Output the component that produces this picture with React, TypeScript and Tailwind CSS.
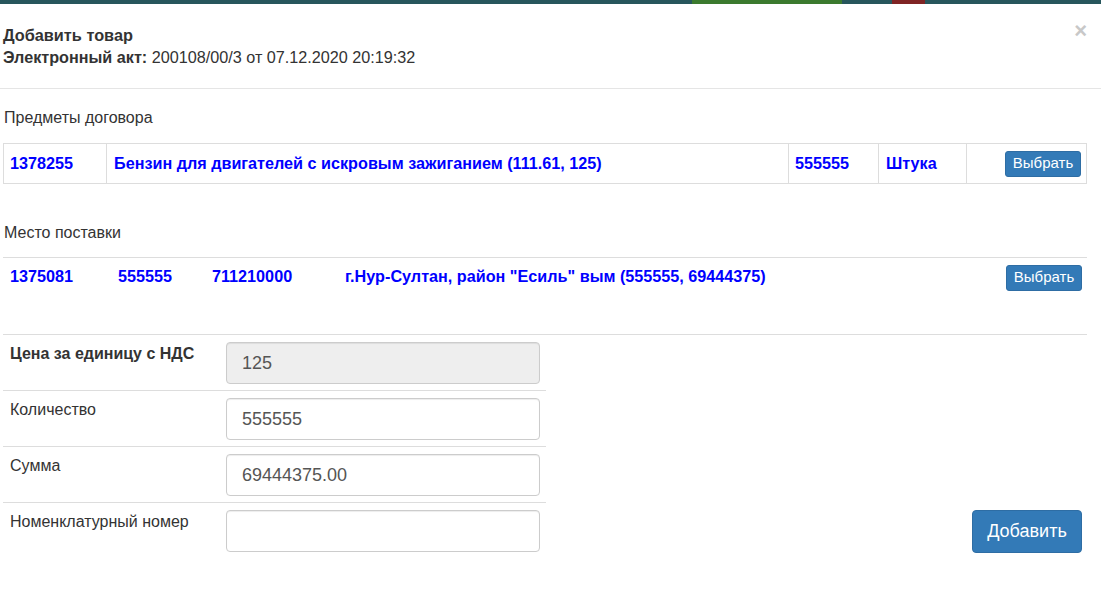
import React from "react";

const font = { fontFamily: '"Liberation Sans", Arial, Helvetica, sans-serif' };

export default function App() {
  return (
    <div className="w-[1101px] h-[599px] bg-white text-[#333] text-[16px] overflow-hidden" style={font}>
      {/* underlying page bar, dimmed */}
      <div className="h-[4px] flex bg-[#27565c]">
        <div className="w-[692px]" />
        <div className="w-[150px] bg-[#3b7a2e]" />
        <div className="w-[50px]" />
        <div className="w-[33px] bg-[#7f2424]" />
      </div>

      {/* header */}
      <div className="relative px-[3px] pt-[20px] pb-[20px] border-b border-[#e5e5e5]">
        <div className="font-bold leading-[22px] text-[16.3px]">Добавить товар</div>
        <div className="leading-[22px] text-[16.2px]">
          <span className="font-bold">Электронный акт:</span> 200108/00/3 от 07.12.2020 20:19:32
        </div>
        <button className="absolute right-[14px] top-[16px] text-[22px] font-bold leading-none text-[#c8c8c8]">×</button>
      </div>

      {/* body */}
      <div className="px-[3px]">
        <div className="mt-[19px] leading-[20px] text-[16px] pl-[1px]">Предметы договора</div>
        <table className="mt-[15px] w-[1084px] border-collapse border border-[#ddd] text-[#0000ff] font-bold text-[16.2px]">
          <tbody>
            <tr className="h-[40px]">
              <td className="w-[103px] border border-[#ddd] pl-[6px]">1378255</td>
              <td className="w-[682px] border border-[#ddd] pl-[7px]">Бензин для двигателей с искровым зажиганием (111.61, 125)</td>
              <td className="w-[90px] border border-[#ddd] pl-[6px]">555555</td>
              <td className="w-[88px] border border-[#ddd] pl-[7px]">Штука</td>
              <td className="border border-[#ddd] pr-[5px] text-right">
                <button className="h-[26px] w-[76px] rounded-[3px] bg-[#337ab7] border border-[#2e6da4] text-white font-normal text-[15px]">Выбрать</button>
              </td>
            </tr>
          </tbody>
        </table>

        <div className="mt-[39px] leading-[20px] text-[16px] pl-[1px]">Место поставки</div>
        <div className="mt-[14px] w-[1084px] border-t border-[#ddd] h-[78px] border-b">
          <div className="flex items-center h-[36px] text-[#0000ff] font-bold text-[16.2px]">
            <div className="w-[115px] pl-[7px]">1375081</div>
            <div className="w-[94px]">555555</div>
            <div className="w-[133px]">711210000</div>
            <div className="flex-1">г.Нур-Султан, район "Есиль" вым (555555, 69444375)</div>
            <button className="h-[26px] w-[76px] mr-[5px] mt-[3px] rounded-[3px] bg-[#337ab7] border border-[#2e6da4] text-white font-normal text-[15px]">Выбрать</button>
          </div>
        </div>

        <div className="flex items-end">
          <div className="w-[543px]">
            {[
              { label: "Цена за единицу с НДС", value: "125", bold: true, disabled: true },
              { label: "Количество", value: "555555" },
              { label: "Сумма", value: "69444375.00" },
              { label: "Номенклатурный номер", value: "", last: true },
            ].map((r) => (
              <div
                key={r.label}
                className={`flex h-[56px] pt-[7px] ${r.last ? "" : "border-b border-[#ddd]"}`}
              >
                <div className={`w-[223px] pl-[7px] pt-[1px] leading-[22px] text-[16px] ${r.bold ? "font-bold" : ""}`}>{r.label}</div>
                <input
                  readOnly
                  value={r.value}
                  className={`h-[42px] w-[314px] rounded-[4px] border border-[#ccc] px-[15px] text-[18px] text-[#555] outline-none shadow-[inset_0_1px_1px_rgba(0,0,0,0.075)] ${r.disabled ? "bg-[#eee]" : "bg-white"}`}
                  style={font}
                />
              </div>
            ))}
          </div>
          <div className="flex-1 flex justify-end pr-[16px] pb-[6px]">
            <button className="h-[43px] w-[110px] rounded-[4px] bg-[#337ab7] border border-[#2e6da4] text-white text-[18px]">Добавить</button>
          </div>
        </div>
      </div>
    </div>
  );
}
